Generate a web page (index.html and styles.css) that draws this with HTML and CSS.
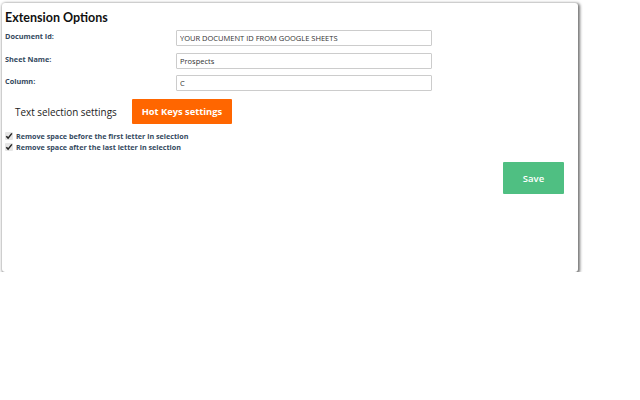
FILE: index.html
```html
<!DOCTYPE html>
<html>
<head>
<meta charset="utf-8">
<link rel="stylesheet" href="styles.css">
</head>
<body>
<div class="panel">
  <h1 class="title">Extension Options</h1>
  <div class="form">
    <div class="row"><label class="lbl">Document Id:</label><input class="field" type="text" value="YOUR DOCUMENT ID FROM GOOGLE SHEETS"></div>
    <div class="row"><label class="lbl">Sheet Name:</label><input class="field" type="text" value="Prospects"></div>
    <div class="row"><label class="lbl">Column:</label><input class="field" type="text" value="C"></div>
  </div>
  <div class="tabs">
    <button class="tab">Text selection settings</button>
    <button class="tab active">Hot Keys settings</button>
  </div>
  <div class="checks">
    <label class="check"><span class="box"><svg viewBox="0 0 8 8" width="8" height="8"><path d="M1.3 4.2 L3.1 6.1 L6.9 1.4" fill="none" stroke="#222" stroke-width="1.5"/></svg></span>Remove space before the first letter in selection</label>
    <label class="check"><span class="box"><svg viewBox="0 0 8 8" width="8" height="8"><path d="M1.3 4.2 L3.1 6.1 L6.9 1.4" fill="none" stroke="#222" stroke-width="1.5"/></svg></span>Remove space after the last letter in selection</label>
  </div>
  <div class="actions">
    <button class="save">Save</button>
  </div>
</div>
</body>
</html>
```
FILE: styles.css
```css
html, body {
  margin: 0;
  padding: 0;
  background: #ffffff;
}
body {
  font-family: "Open Sans", "Noto Sans", sans-serif;
  padding: 3px 0 0 2px;
}
.panel {
  width: 570px;
  height: 263px;
  padding: 6px 3px 0 3px;
  background: #ffffff;
  border-radius: 3px;
  box-shadow: 1px 1px 3px 1px rgba(0, 0, 0, 0.55);
}
.title {
  margin: 0;
  font-family: "Lato", "Open Sans", sans-serif;
  font-size: 12.5px;
  line-height: 17px;
  font-weight: 700;
  color: #111111;
}
.form {
  display: flex;
  flex-direction: column;
  gap: 6.5px;
  margin-top: 4px;
}
.row {
  display: grid;
  grid-template-columns: 171px 256px;
  align-items: start;
}
.lbl {
  font-size: 7.3px;
  line-height: 12px;
  font-weight: 700;
  color: #34495e;
}
.field {
  box-sizing: border-box;
  width: 256px;
  height: 16px;
  margin: 0;
  padding: 0 3px;
  border: 1px solid #cccccc;
  border-radius: 1px;
  font-family: "Open Sans", sans-serif;
  font-size: 7.5px;
  color: #333333;
  outline: none;
}
.tabs {
  display: flex;
  gap: 5px;
  margin-top: 8px;
}
.tab {
  height: 25px;
  padding: 0 10px;
  border: none;
  background: transparent;
  font-family: "Open Sans", sans-serif;
  font-size: 9.9px;
  color: #222222;
  cursor: pointer;
}
.tab.active {
  background: #ff6600;
  color: #ffffff;
  font-weight: 700;
  font-size: 9.3px;
  border-radius: 1px;
}
.checks {
  display: flex;
  flex-direction: column;
  margin-top: 6px;
}
.check {
  display: flex;
  align-items: center;
  height: 11px;
  font-size: 7.2px;
  font-weight: 700;
  color: #34495e;
}
.box {
  display: inline-flex;
  width: 8px;
  height: 8px;
  margin-right: 3px;
  background: #e6e6e6;
  border-radius: 1px;
}
.actions {
  display: flex;
  justify-content: flex-end;
  margin-top: 10px;
  padding-right: 11px;
}
.save {
  width: 61px;
  height: 32px;
  border: none;
  background: #4fbf82;
  color: #ffffff;
  font-family: "Open Sans", sans-serif;
  font-size: 9.5px;
  font-weight: 600;
  border-radius: 1px;
}
```
